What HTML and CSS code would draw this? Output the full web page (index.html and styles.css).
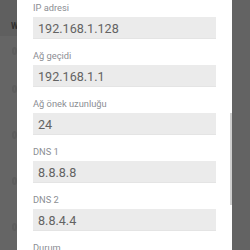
FILE: index.html
```html
<!DOCTYPE html>
<html lang="tr">
<head>
<meta charset="utf-8">
<title>IP ayarları</title>
<link rel="stylesheet" href="styles.css">
</head>
<body>
<div class="screen">
  <div class="backdrop left">
    <div class="appbar"><span class="title">Wi-Fi</span></div>
    <ul class="bg-list">
      <li><span class="bg-icon"></span></li>
      <li><span class="bg-icon"></span></li>
      <li><span class="bg-icon"></span></li>
      <li><span class="bg-icon"></span></li>
      <li><span class="bg-icon"></span></li>
    </ul>
  </div>
  <div class="dialog">
    <div class="field">
      <div class="label">IP adresi</div>
      <div class="input">192.168.1.128</div>
    </div>
    <div class="field">
      <div class="label">Ağ geçidi</div>
      <div class="input">192.168.1.1</div>
    </div>
    <div class="field">
      <div class="label">Ağ önek uzunluğu</div>
      <div class="input">24</div>
    </div>
    <div class="field">
      <div class="label">DNS 1</div>
      <div class="input">8.8.8.8</div>
    </div>
    <div class="field">
      <div class="label">DNS 2</div>
      <div class="input">8.8.4.4</div>
    </div>
    <div class="field">
      <div class="label">Durum</div>
    </div>
    <div class="scrollbar"></div>
  </div>
  <div class="backdrop right"></div>
</div>
</body>
</html>
```

FILE: styles.css
```css
* { box-sizing: border-box; }
html, body { margin: 0; padding: 0; }
body {
  background: #646464;
  font-family: Roboto, "Noto Sans", sans-serif;
  width: 250px;
  height: 250px;
  overflow: hidden;
}
.screen {
  display: flex;
  width: 250px;
  height: 250px;
  overflow: hidden;
}
.backdrop {
  background: #656565;
  overflow: hidden;
}
.backdrop.left {
  width: 17px;
  flex: 0 0 17px;
}
.backdrop.right {
  width: 18px;
  flex: 0 0 18px;
  background: #636363;
}
.appbar {
  height: 36px;
  background: #5f5f5f;
  padding: 14px 0 0 11px;
  white-space: nowrap;
}
.title {
  font-size: 8.5px;
  font-weight: 700;
  color: #2f2f2f;
}
.bg-list {
  list-style: none;
  margin: 0;
  padding: 0;
}
.bg-list li {
  height: 46px;
  display: flex;
  align-items: center;
  padding-left: 12px;
}
.bg-list li:first-child { height: 30px; }
.bg-icon {
  width: 8px;
  height: 8px;
  border-radius: 50%;
  border: 2px solid #5d5d5d;
}
.dialog {
  position: relative;
  width: 215px;
  flex: 0 0 215px;
  background: #ffffff;
  padding: 2px 16px 0 16px;
  display: flex;
  flex-direction: column;
  gap: 11.5px;
}
.label {
  font-size: 9.3px;
  line-height: 12px;
  color: #8b8e93;
  margin-bottom: 2.5px;
}
.input {
  height: 22px;
  background: #ebebeb;
  border-bottom: 1px solid #e4e4e4;
  width: 183px;
  padding-left: 5px;
  font-size: 12.6px;
  line-height: 23px;
  color: #636363;
}
.scrollbar {
  position: absolute;
  right: 0;
  top: 113px;
  width: 2px;
  height: 92px;
  background: #cfcfcf;
}
```
